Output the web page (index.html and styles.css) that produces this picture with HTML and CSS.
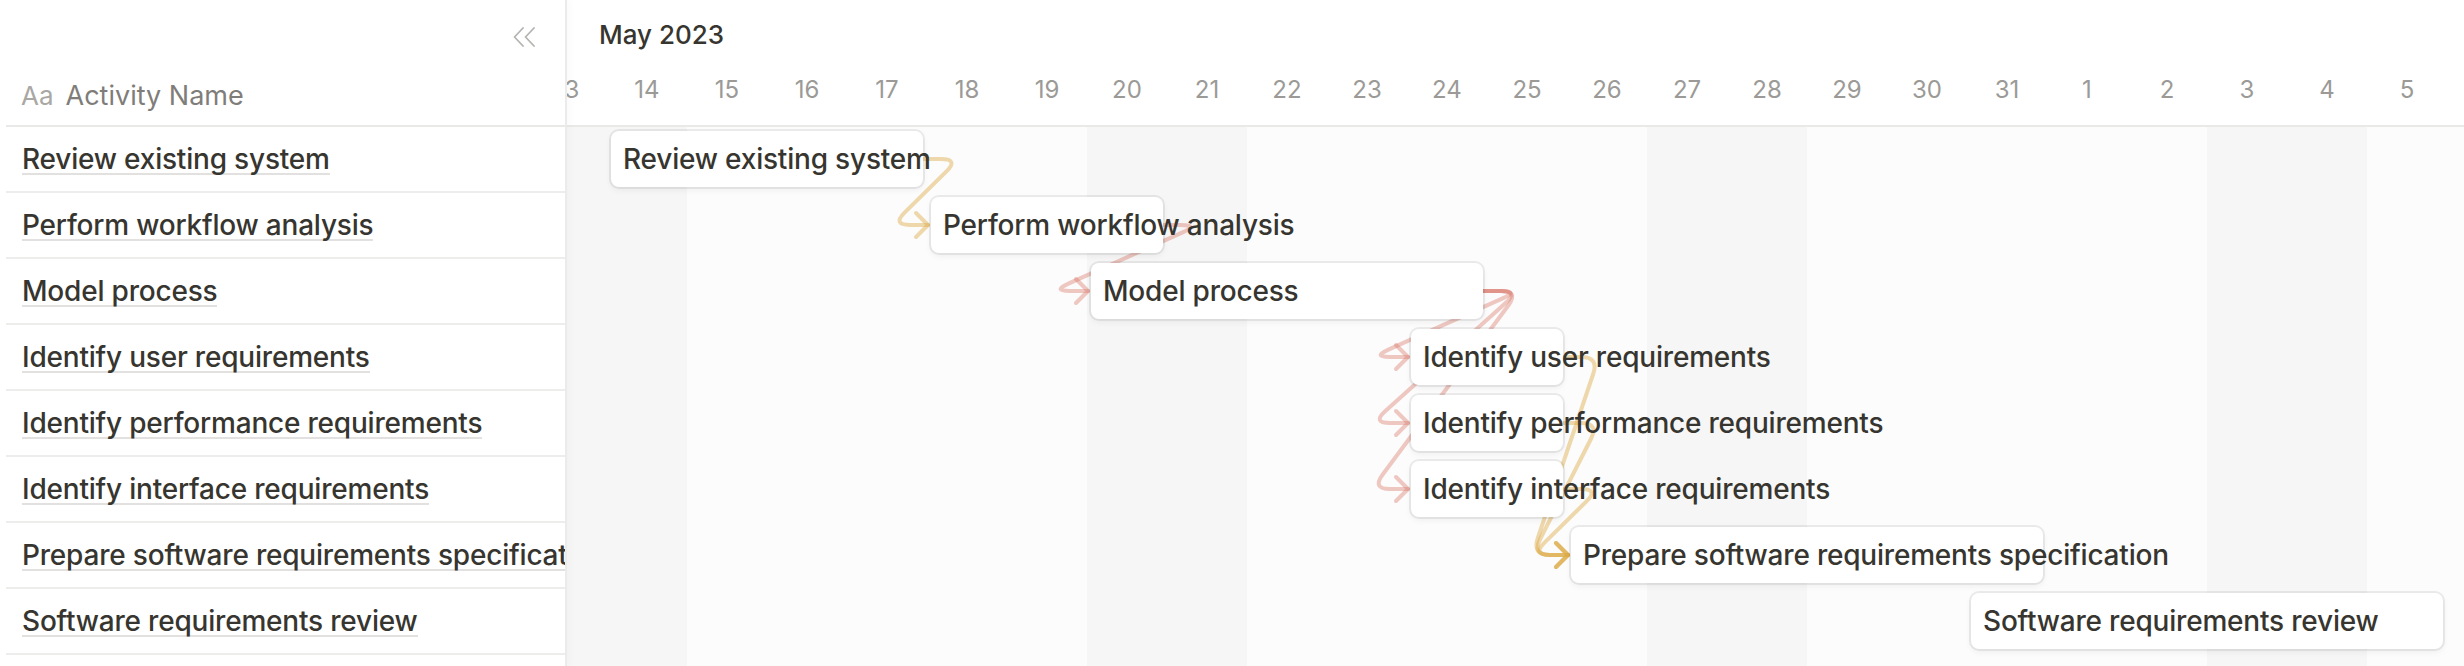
FILE: index.html
```html
<!DOCTYPE html>
<html lang="en">
<head>
    <meta charset="UTF-8">
    <meta name="viewport" content="width=device-width, initial-scale=1.0">
    <title>Timeline - Activities</title>
    <link rel="stylesheet" href="styles.css">
</head>
<body>
    <div class="app">
        <aside class="sidebar">
            <div class="side-head">
                <div class="collapse">
                    <svg width="23" height="20" viewBox="0 0 23 20">
                        <polyline points="10,1 1.5,10 10,19" />
                        <polyline points="21,1 12.5,10 21,19" />
                    </svg>
                </div>
                <div class="col-title"><span class="type-icon">Aa</span>Activity Name</div>
            </div>
            <div class="side-row"><span class="name">Review existing system</span></div>
            <div class="side-row"><span class="name">Perform workflow analysis</span></div>
            <div class="side-row"><span class="name">Model process</span></div>
            <div class="side-row"><span class="name">Identify user requirements</span></div>
            <div class="side-row"><span class="name">Identify performance requirements</span></div>
            <div class="side-row"><span class="name">Identify interface requirements</span></div>
            <div class="side-row"><span class="name">Prepare software requirements specification</span></div>
            <div class="side-row"><span class="name">Software requirements review</span></div>
        </aside>

        <main class="timeline">
            <div class="track">
                <div class="tl-head">
                    <div class="month">May 2023</div>
                    <div class="days">
                        <span>13</span><span>14</span><span>15</span><span>16</span><span>17</span>
                        <span>18</span><span>19</span><span>20</span><span>21</span><span>22</span>
                        <span>23</span><span>24</span><span>25</span><span>26</span><span>27</span>
                        <span>28</span><span>29</span><span>30</span><span>31</span><span>1</span>
                        <span>2</span><span>3</span><span>4</span><span>5</span><span>6</span>
                    </div>
                </div>

                <div class="tl-body">
                    <!-- dependency lines, drawn under the bars -->
                    <svg class="links" width="2000" height="528" viewBox="0 0 2000 528">
                        <g class="dep-yellow">
                            <path d="M396 32 L414 32 Q432 32 419.2 44.6 L377.8 85.4 Q365 98 383 98 L401 98" />
                            <path d="M389 86 L401 98 L389 110" />
                        </g>
                        <g class="dep-pink">
                            <path d="M636 98 L654 98 Q672 98 655.6 105.4 L541.4 156.6 Q525 164 543 164 L561 164" />
                            <path d="M549 152 L561 164 L549 176" />

                            <path d="M956 164 L974 164 Q992 164 975.6 171.4 L861.4 222.6 Q845 230 863 230 L881 230" />
                            <path d="M869 218 L881 230 L869 242" />

                            <path d="M956 164 L974 164 Q992 164 978.6 176 L858.4 284 Q845 296 863 296 L881 296" />
                            <path d="M869 284 L881 296 L869 308" />

                            <path d="M956 164 L974 164 Q992 164 981.3 178.5 L855.7 347.5 Q845 362 863 362 L881 362" />
                            <path d="M869 350 L881 362 L869 374" />
                        </g>
                        <g class="dep-yellow">
                            <path d="M1036 230 L1054 230 Q1072 230 1066.2 247 L1010.8 411 Q1005 428 1023 428 L1041 428" />
                            <path d="M1029 416 L1041 428 L1029 440" />

                            <path d="M1036 296 L1054 296 Q1072 296 1063.9 312 L1013.2 412 Q1005 428 1023 428 L1041 428" />
                            <path d="M1029 416 L1041 428 L1029 440" />

                            <path d="M1036 362 L1054 362 Q1072 362 1059.2 374.6 L1017.8 415.4 Q1005 428 1023 428 L1041 428" />
                            <path d="M1029 416 L1041 428 L1029 440" />
                        </g>
                    </svg>

                    <div class="tl-row"><div class="bar" style="grid-column: 2 / span 4">Review existing system</div></div>
                    <div class="tl-row"><div class="bar" style="grid-column: 6 / span 3">Perform workflow analysis</div></div>
                    <div class="tl-row"><div class="bar" style="grid-column: 8 / span 5">Model process</div></div>
                    <div class="tl-row"><div class="bar" style="grid-column: 12 / span 2">Identify user requirements</div></div>
                    <div class="tl-row"><div class="bar" style="grid-column: 12 / span 2">Identify performance requirements</div></div>
                    <div class="tl-row"><div class="bar" style="grid-column: 12 / span 2">Identify interface requirements</div></div>
                    <div class="tl-row"><div class="bar" style="grid-column: 14 / span 6">Prepare software requirements specification</div></div>
                    <div class="tl-row"><div class="bar" style="grid-column: 19 / span 6">Software requirements review</div></div>
                </div>
            </div>
        </main>
    </div>
</body>
</html>
```

FILE: styles.css
```css
* {
    margin: 0;
    padding: 0;
    box-sizing: border-box;
}

body {
    font-family: Inter, "Noto Sans", sans-serif;
    color: #37352f;
    background: white;
    overflow: hidden;
}

.app {
    display: flex;
    height: 100vh;
}

/* left table */

.sidebar {
    width: 567px;
    flex-shrink: 0;
    background: white;
    border-right: 2px solid #ebebea;
    box-shadow: 3px 0 8px rgba(0, 0, 0, 0.025);
    position: relative;
    z-index: 2;
}

.side-head {
    height: 127px;
    margin-left: 6px;
    border-bottom: 2px solid #e9e9e8;
    display: flex;
    flex-direction: column;
}

.collapse {
    height: 62px;
    display: flex;
    justify-content: flex-end;
    padding: 27px 29px 0 0;
}

.collapse svg polyline {
    fill: none;
    stroke: #b5b4b1;
    stroke-width: 1.8;
    stroke-linecap: round;
    stroke-linejoin: round;
}

.col-title {
    flex: 1;
    display: flex;
    align-items: center;
    padding: 4px 0 0 15px;
    font-size: 27px;
    color: #7f7d79;
}

.type-icon {
    color: #a9a8a4;
    font-size: 26px;
    margin-right: 12px;
}

.side-row {
    height: 66px;
    margin-left: 6px;
    border-bottom: 2px solid #ededec;
    display: flex;
    align-items: center;
    padding: 2px 0 0 16px;
    white-space: nowrap;
    overflow: hidden;
    font-size: 28px;
    font-weight: 500;
    letter-spacing: -0.2px;
}

.side-row .name {
    display: inline-block;
    line-height: 1;
    border-bottom: 2px solid #e2e1df;
}

/* timeline */

.timeline {
    flex: 1;
    overflow: hidden;
    position: relative;
}

.track {
    width: 2000px;
    height: 100%;
    margin-left: -40px;
    display: flex;
    flex-direction: column;
}

.tl-head {
    height: 127px;
    flex-shrink: 0;
    border-bottom: 2px solid #e9e9e8;
    background: white;
}

.month {
    height: 70px;
    line-height: 70px;
    padding-left: 72px;
    font-size: 26px;
    font-weight: 500;
}

.days {
    display: grid;
    grid-template-columns: repeat(25, 80px);
    height: 40px;
    line-height: 40px;
    font-size: 24px;
    color: #9b9a97;
    text-align: center;
}

.tl-body {
    flex: 1;
    position: relative;
    background: repeating-linear-gradient(90deg, #f6f6f6 0 160px, #fcfcfc 160px 560px);
}

.links {
    position: absolute;
    left: 0;
    top: 0;
    z-index: 0;
    pointer-events: none;
}

.links path {
    fill: none;
    stroke-width: 4;
    stroke-linecap: round;
    stroke-linejoin: round;
}

.dep-yellow path {
    stroke: rgba(221, 170, 70, 0.45);
}

.dep-pink path {
    stroke: rgba(218, 120, 105, 0.4);
}

.tl-row {
    height: 66px;
    display: grid;
    grid-template-columns: repeat(25, 80px);
    position: relative;
    z-index: 1;
}

.bar {
    min-width: 0;
    height: 56px;
    margin: 4px 4px 0;
    padding-left: 12px;
    background: white;
    border-radius: 8px;
    box-shadow: 0 0 0 2px rgba(15, 15, 15, 0.07), 0 3px 7px rgba(15, 15, 15, 0.06);
    display: flex;
    align-items: center;
    font-size: 28px;
    font-weight: 500;
    letter-spacing: -0.2px;
    white-space: nowrap;
}
```
